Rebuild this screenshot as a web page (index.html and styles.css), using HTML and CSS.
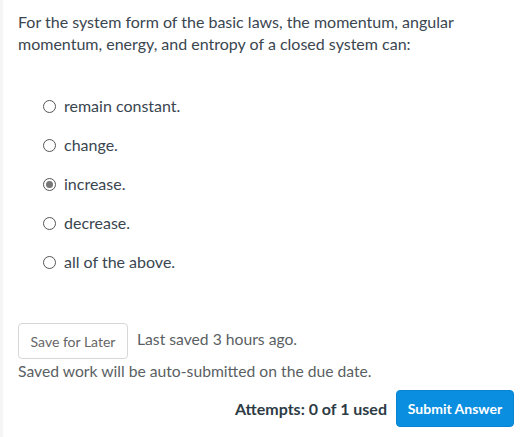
FILE: index.html
```html
<!DOCTYPE html>
<html>
<head>
<meta charset="utf-8">
<link rel="stylesheet" href="styles.css">
</head>
<body>
<div class="page">
  <p class="question">For the system form of the basic laws, the momentum, angular momentum, energy, and entropy of a closed system can:</p>
  <div class="options">
    <label class="option"><span class="radio"></span><span>remain constant.</span></label>
    <label class="option"><span class="radio"></span><span>change.</span></label>
    <label class="option"><span class="radio checked"></span><span>increase.</span></label>
    <label class="option"><span class="radio"></span><span>decrease.</span></label>
    <label class="option"><span class="radio"></span><span>all of the above.</span></label>
  </div>
  <div class="save-row">
    <button class="save-btn">Save for Later</button>
    <span class="saved">Last saved 3 hours ago.</span>
  </div>
  <p class="note">Saved work will be auto-submitted on the due date.</p>
  <div class="submit-row">
    <span class="attempts">Attempts: 0 of 1 used</span>
    <button class="submit-btn">Submit Answer</button>
  </div>
</div>
</body>
</html>
```
FILE: styles.css
```css
html, body {
  margin: 0;
  padding: 0;
  background: #ffffff;
}
body {
  font-family: Lato, "Noto Sans", sans-serif;
  color: #3a4650;
}
.page {
  border-left: 3px solid #f5f5f5;
  padding: 11px 16px 0 15px;
  height: 437px;
  box-sizing: border-box;
}
.question {
  margin: 0;
  font-size: 16px;
  line-height: 22px;
  width: 440px;
}
.options {
  display: flex;
  flex-direction: column;
  gap: 19px;
  padding: 41px 0 0 25px;
}
.option {
  display: flex;
  align-items: center;
  gap: 8px;
  font-size: 16px;
  line-height: 20px;
}
.radio {
  width: 11px;
  height: 11px;
  border: 1px solid #555;
  border-radius: 50%;
  box-sizing: content-box;
  display: inline-flex;
  align-items: center;
  justify-content: center;
}
.radio.checked::after {
  content: "";
  width: 7px;
  height: 7px;
  border-radius: 50%;
  background: #777;
}
.save-row {
  display: flex;
  align-items: center;
  gap: 9px;
  margin-top: 51px;
}
.save-btn {
  font-family: Lato, "Noto Sans", sans-serif;
  font-size: 14px;
  color: #666;
  background: #fff;
  border: 1px solid #d7d7d7;
  border-radius: 4px;
  height: 36px;
  width: 110px;
  padding: 0;
}
.saved {
  font-size: 15.7px;
  color: #5a5f63;
  margin-top: -4px;
}
.note {
  margin: 2px 0 0;
  font-size: 15.7px;
  line-height: 20px;
  color: #5a5f63;
}
.submit-row {
  display: flex;
  justify-content: flex-end;
  align-items: center;
  gap: 9px;
  margin-top: 9px;
}
.attempts {
  font-size: 16px;
  font-weight: bold;
  color: #2d3b45;
}
.submit-btn {
  font-family: Lato, "Noto Sans", sans-serif;
  font-size: 14px;
  font-weight: bold;
  color: #fff;
  background: #0a8ee0;
  border: 1px solid #0784d2;
  border-radius: 4px;
  height: 37px;
  width: 118px;
  padding: 0;
}
```
